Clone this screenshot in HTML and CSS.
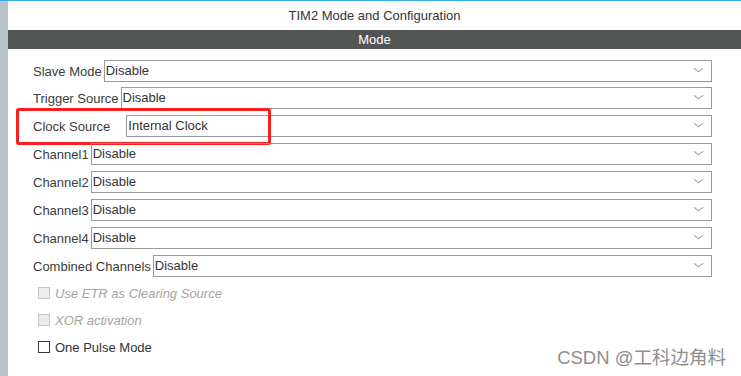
FILE: index.html
```html
<!DOCTYPE html>
<html lang="en">
<head>
  <meta charset="UTF-8">
  <title>TIM2 Mode and Configuration</title>
  <link rel="stylesheet" href="styles.css">
</head>
<body>
  <div class="frame">
    <div class="side-strip"></div>
    <div class="panel">
      <div class="panel-title">TIM2 Mode and Configuration</div>
      <div class="section-bar">Mode</div>
      <div class="form">
        <div class="row">
          <span class="label">Slave Mode</span>
          <div class="select">Disable<span class="chevron"></span></div>
        </div>
        <div class="row">
          <span class="label">Trigger Source</span>
          <div class="select">Disable<span class="chevron"></span></div>
        </div>
        <div class="row row-wide">
          <span class="label">Clock Source</span>
          <div class="select">Internal Clock<span class="chevron"></span></div>
          <div class="highlight"></div>
        </div>
        <div class="row">
          <span class="label">Channel1</span>
          <div class="select">Disable<span class="chevron"></span></div>
        </div>
        <div class="row">
          <span class="label">Channel2</span>
          <div class="select">Disable<span class="chevron"></span></div>
        </div>
        <div class="row">
          <span class="label">Channel3</span>
          <div class="select">Disable<span class="chevron"></span></div>
        </div>
        <div class="row">
          <span class="label">Channel4</span>
          <div class="select">Disable<span class="chevron"></span></div>
        </div>
        <div class="row">
          <span class="label">Combined Channels</span>
          <div class="select">Disable<span class="chevron"></span></div>
        </div>
        <div class="checks">
          <label class="check disabled"><span class="box"></span>Use ETR as Clearing Source</label>
          <label class="check disabled"><span class="box"></span>XOR activation</label>
          <label class="check"><span class="box"></span>One Pulse Mode</label>
        </div>
      </div>
      <div class="watermark">CSDN @工科边角料</div>
    </div>
  </div>
</body>
</html>
```

FILE: styles.css
```css
* { margin: 0; padding: 0; box-sizing: border-box; }
body {
  font-family: 'Liberation Sans', Arial, sans-serif;
  font-size: 13px;
  color: #333;
  background-color: white;
  width: 741px;
  height: 376px;
  overflow: hidden;
}
.frame {
  display: flex;
  height: 376px;
  border-top: 1px solid #3aa9e2;
}
.side-strip {
  width: 8px;
  background-color: #b8c3c9;
  flex-shrink: 0;
}
.panel {
  position: relative;
  flex: 1;
  display: flex;
  flex-direction: column;
}
.panel-title {
  height: 29px;
  line-height: 29px;
  text-align: center;
  color: #333;
}
.section-bar {
  height: 19px;
  line-height: 19px;
  background-color: #535554;
  color: white;
  text-align: center;
}
.form {
  display: flex;
  flex-direction: column;
  gap: 6px;
  padding: 11px 29px 0 25px;
}
.row {
  position: relative;
  display: flex;
  align-items: center;
  gap: 2px;
  height: 22px;
  color: #3c3c3c;
}
.row:first-child { margin-bottom: -1px; }
.row-wide { gap: 16px; }
.select {
  position: relative;
  flex: 1;
  height: 22px;
  line-height: 20px;
  border: 1px solid #9a9a9a;
  padding-left: 1px;
  color: #333;
}
.chevron {
  position: absolute;
  right: 9px;
  top: 4px;
  width: 7px;
  height: 7px;
  border-right: 1px solid #8c8c8c;
  border-bottom: 1px solid #8c8c8c;
  transform: scaleY(0.75) rotate(45deg);
}
.highlight {
  position: absolute;
  left: -17px;
  top: -7px;
  width: 255px;
  height: 37px;
  border: 3px solid #fa1f1f;
  border-radius: 3px;
}
.checks {
  display: flex;
  flex-direction: column;
  gap: 11px;
  padding: 2px 0 0 5px;
}
.check {
  display: flex;
  align-items: center;
  gap: 5px;
  height: 16px;
  color: #333;
}
.box {
  width: 12px;
  height: 12px;
  border: 1px solid #3a3a3a;
  background-color: white;
}
.check.disabled {
  color: #a4a4a4;
  font-style: italic;
}
.check.disabled .box {
  border-color: #c4c4c4;
  background-color: #ececec;
}
.watermark {
  position: absolute;
  right: 15px;
  bottom: 7px;
  font-family: 'Liberation Sans', 'Noto Sans CJK SC', sans-serif;
  font-size: 18.5px;
  color: #8e8e8e;
}
```
